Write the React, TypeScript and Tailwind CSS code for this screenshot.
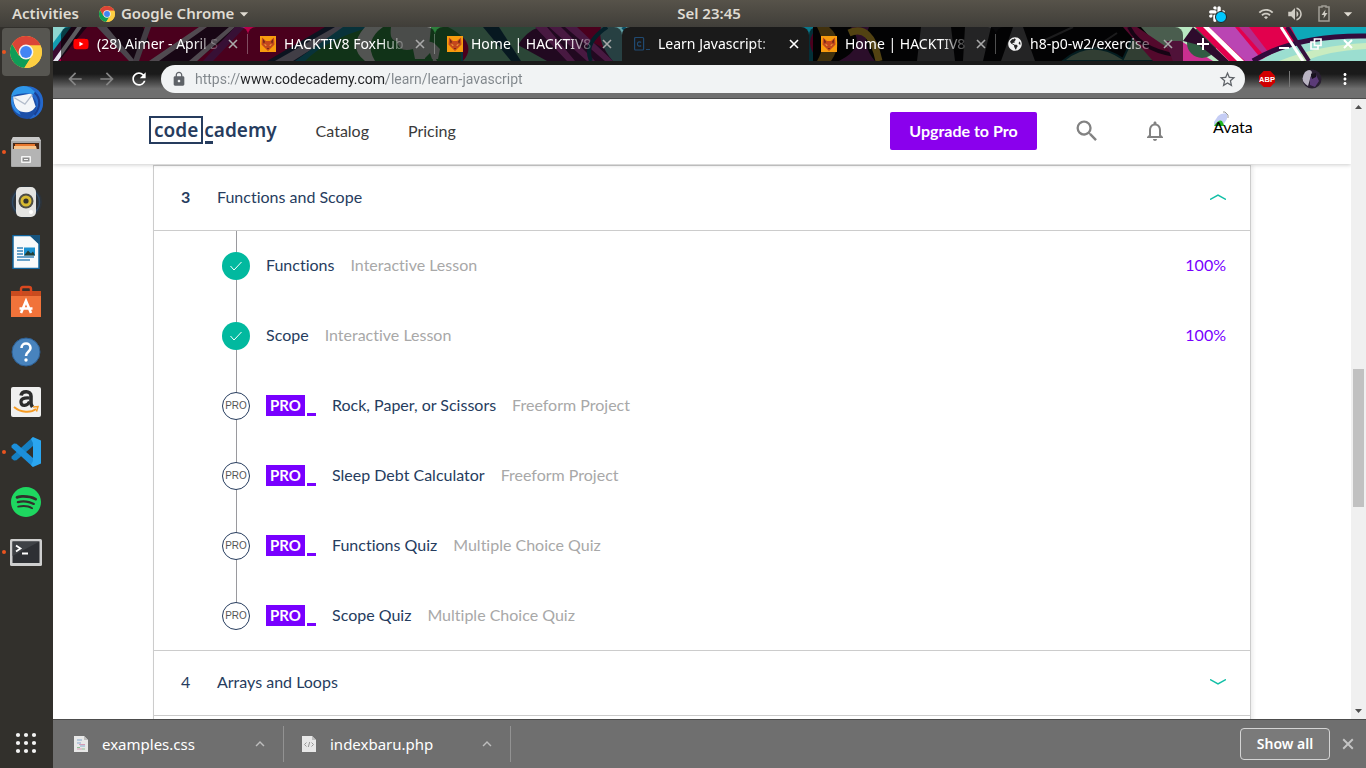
import React from "react";
import { clsx } from "clsx";
import {
  MdArrowBack,
  MdArrowForward,
  MdRefresh,
  MdLock,
  MdStarBorder,
  MdSearch,
  MdNotificationsNone,
  MdMoreVert,
  MdArrowDropDown,
  MdExpandLess,
  MdWifi,
  MdVolumeUp,
} from "react-icons/md";
import { FaSlack, FaYoutube, FaGlobeAmericas } from "react-icons/fa";
import { SiSpotify } from "react-icons/si";

function ChromeIcon({ className }: { className?: string }) {
  return (
    <svg viewBox="0 0 32 32" className={className} aria-hidden="true">
      <circle cx="16" cy="16" r="16" fill="#fbc93c" />
      <path d="M2.1 8A16 16 0 0 0 14.3 31.9L21.5 20.5 16 16 9 19.8Z" fill="#0f9d58" />
      <path d="M2.1 8A16 16 0 0 1 30.6 9.6L16 9.6 9.6 19.8Z" fill="#db4437" />
      <path d="M30.6 9.6A16 16 0 0 1 14.3 32L22 19.8 16 9.6Z" fill="#fdce42" />
      <circle cx="16" cy="16" r="7.4" fill="#f4f4f4" />
      <circle cx="16" cy="16" r="5.9" fill="#4285f4" />
    </svg>
  );
}

function ThunderbirdIcon() {
  return (
    <svg viewBox="0 0 34 34" className="size-9" aria-hidden="true">
      <circle cx="18" cy="18" r="15" fill="#1c4fa8" />
      <path d="M3 12C7 2 18 1 24 3c8 3 10 11 9 17-1 7-6 12-13 13 7-5 9-13 5-19C20 7 9 7 3 12Z" fill="#2468cc" />
      <path d="M3 12C2 21 6 27 12 29l-2-4C5 21 4 16 6 11Z" fill="#2f8be8" />
      <path d="M5 12 22 9l4 12c-2 5-8 7-14 5-5-2-7-8-7-14Z" fill="#f3f5f8" />
      <path d="m6 13 10 6 7-9" fill="none" stroke="#b3bccb" strokeWidth="1.2" />
      <path d="M3 12C4 4 12 0 20 3c4 2 5 5 8 6-7 1-9-1-13 0-4 0-8 1-12 3Z" fill="#2f97ea" />
      <path d="M25 8c6 5 6 14 0 21" stroke="#1a3f92" strokeWidth="2" fill="none" />
    </svg>
  );
}

function FilesIcon() {
  return (
    <svg viewBox="0 0 32 32" className="size-8" aria-hidden="true">
      <path d="M3 1h26l2 4v25a1 1 0 0 1-1 1H2a1 1 0 0 1-1-1V5Z" fill="#a8a8a8" />
      <path d="M3 1h26l2 4H1Z" fill="#c9c9c9" />
      <rect x="3" y="7" width="26" height="7" fill="#4c2a17" />
      <path d="M5 8h20v6H5Z" fill="#e9772d" />
      <path d="M4 10h22l1 4H4Z" fill="#f7c48c" />
      <rect x="2" y="13" width="28" height="17" fill="#b4b4b4" />
      <rect x="11" y="20" width="10" height="7" rx="1" fill="#f4f4f4" />
      <rect x="12.500" y="21.500" width="7" height="4" fill="#8b8b8b" />
      <path d="M14 23.500h4" stroke="#f4f4f4" />
    </svg>
  );
}

function RhythmboxIcon() {
  return (
    <svg viewBox="0 0 36 32" className="h-8 w-9" aria-hidden="true">
      <circle cx="18" cy="16" r="16" fill="#2d333a" />
      <circle cx="18" cy="16" r="13.5" fill="none" stroke="#2f4a66" strokeWidth="1.5" />
      <rect x="8" y="1" width="20" height="30" rx="5" fill="#e4e4e2" />
      <circle cx="18" cy="15" r="7.5" fill="#4d4d46" />
      <circle cx="18" cy="15" r="5.5" fill="#d7ba32" />
      <circle cx="18" cy="15" r="2.6" fill="#33332e" />
      <rect x="21" y="24" width="4" height="4" rx="2" fill="#fff" />
    </svg>
  );
}

function WriterIcon() {
  return (
    <svg viewBox="0 0 28 34" className="h-[34px] w-7" aria-hidden="true">
      <path d="M1 .5h18l8 8v25H1Z" fill="#f8fafb" stroke="#10659f" strokeWidth="1.5" />
      <path d="M17 0h11v10Z" fill="#16547f" />
      <path d="M5 13h6M5 16h6M5 19h6M5 22h17M5 25h13" stroke="#3b86ba" strokeWidth="1.6" />
      <rect x="12" y="12.500" width="11" height="8" fill="#1c91d0" />
      <path d="m12 20.500 4-5 3 3 2-2 2 4Z" fill="#233f36" />
    </svg>
  );
}

function SoftwareIcon() {
  return (
    <svg viewBox="0 0 32 34" className="h-[34px] w-8" aria-hidden="true">
      <path d="M1 6h30v26H1Z" fill="#ec6a30" />
      <path d="M1 6h30v5H1Z" fill="#c94c1f" />
      <path d="M1 11h30v21H1Z" fill="#f1733a" />
      <path d="M11 10V4q0-2 2-2h6q2 0 2 2v6" fill="none" stroke="#d9481f" strokeWidth="2.400" />
      <path d="M11 28 16 16l5 12M9.500 23.500h13" fill="none" stroke="#fff" strokeWidth="2.600" />
    </svg>
  );
}

function HelpIcon() {
  return (
    <svg viewBox="0 0 30 30" className="size-[30px]" aria-hidden="true">
      <circle cx="15" cy="15" r="14" fill="#4883bd" stroke="#2d5f94" />
      <path d="M10.500 11c0-6 9-6 9 0 0 4-4.500 3.500-4.500 8" fill="none" stroke="#fff" strokeWidth="2.600" />
      <circle cx="15" cy="23" r="1.700" fill="#fff" />
    </svg>
  );
}

function AmazonIcon() {
  return (
    <svg viewBox="0 0 30 30" className="size-[30px]" aria-hidden="true">
      <rect width="30" height="30" rx="2" fill="#f0f0f0" />
      <path d="M10 8.500c1-5 10-5 10 .5v7c0 2 .5 2.500 1.500 4" fill="none" stroke="#2c2c2c" strokeWidth="3.600" />
      <path d="M18.500 11c-6-.5-9 1-8.500 4.500.5 4 6.500 4 8.500-1" fill="none" stroke="#2c2c2c" strokeWidth="3.200" />
      <path d="M3 20c7 6 17 6 22 2" fill="none" stroke="#f49a23" strokeWidth="1.900" />
      <path d="m22 20 5-.5-1.500 5" fill="none" stroke="#f49a23" strokeWidth="1.500" />
    </svg>
  );
}

function CodeEditorIcon() {
  return (
    <svg viewBox="0 0 30 30" className="size-[30px]" aria-hidden="true">
      <path d="M22 0 .5 19.500v2l2.500 2 2.500-.2L22 9Z" fill="#1580c4" />
      <path d="M22 30 .5 10.500v-2l2.500-2 2.500.2L22 21Z" fill="#1c8fdb" />
      <path d="M22 0 30 3.500v23L22 30l-2-2 2-4V6l-2-4Z" fill="#2ba6f0" />
    </svg>
  );
}

function TerminalIcon() {
  return (
    <svg viewBox="0 0 32 27" className="h-[27px] w-8" aria-hidden="true">
      <rect width="32" height="27" rx="1.500" fill="#cfcfcf" />
      <rect x="2.500" y="2.500" width="27" height="21.500" fill="#2e3034" />
      <path d="M2.500 2.500h27L2.500 17Z" fill="#3f4246" />
      <path d="m6 6.500 4.500 3L6 12.500M12 14.500h6" fill="none" stroke="#fff" strokeWidth="1.800" />
    </svg>
  );
}

function FoxIcon() {
  return (
    <svg viewBox="0 0 16 16" className="size-4 shrink-0" aria-hidden="true">
      <rect width="16" height="16" fill="#f89c0e" />
      <path d="M2 1.500 6 5h4l4-3.500.5 7L11 12l-3 3-3-3-3.500-3.500Z" fill="#c4481d" />
      <path d="m3 3 2 3-1.500 1.500ZM13 3l-2 3 1.500 1.500Z" fill="#5c2315" />
      <path d="m4 8 2.500 1L6 10ZM12 8 9.500 9l.5 1Z" fill="#ffd24d" />
      <path d="m7 12 1 1 1-1Z" fill="#2d1511" />
    </svg>
  );
}

function CodecademyFavicon() {
  return (
    <svg viewBox="0 0 16 16" className="size-4 shrink-0" aria-hidden="true">
      <rect x=".6" y="1.500" width="9" height="12.500" rx="1" fill="none" stroke="#204a72" strokeWidth="1.200" />
      <path d="M7.100 6.500c-1-1.200-3.700-.8-3.700 1.500s2.700 2.700 3.700 1.500M12 13.500h4" fill="none" stroke="#204a72" strokeWidth="1.200" />
    </svg>
  );
}

function CrossIcon({ className }: { className?: string }) {
  return (
    <svg viewBox="0 0 10 10" className={className} aria-hidden="true">
      <path d="m1 1 8 8m0-8-8 8" stroke="currentColor" strokeWidth="1.600" />
    </svg>
  );
}

function FileIcon({ kind }: { kind: "css" | "php" }) {
  return (
    <svg viewBox="0 0 14 16" className="h-4 w-3.5 shrink-0" aria-hidden="true">
      <path d="M0 0h10l4 4v12H0Z" fill="#e8e8e8" />
      <path d="M10 0v4h4Z" fill="#bdbdbd" />
      {kind === "css" ? (
        <>
          <path d="M3 4h5M3 7h4M6 10h5" stroke="#86a9cf" />
          <path d="M5 8.500h6M3 13h5" stroke="#d69bb5" />
          <path d="M3 11.500h3M8 13h3" stroke="#8cc094" />
        </>
      ) : (
        <path d="m4.500 6.500-2 2 2 2M9.500 6.500l2 2-2 2M7.700 6l-1.400 5" fill="none" stroke="#8f8f8f" strokeWidth=".9" />
      )}
    </svg>
  );
}

function Wallpaper() {
  return (
    <svg viewBox="0 0 1313 34" preserveAspectRatio="none" className="absolute inset-0 h-full w-full" aria-hidden="true">
      <rect width="1313" height="34" fill="#b80049" />
      <path d="M0 0h22L0 32Z" fill="#8fd6d0" />
      <path d="M12 0h10L0 26V16Z" fill="#139bb0" />
      <path d="M18 0h16L6 34H0V24Z" fill="#3a0a30" />
      <path d="M24 0h5L5 34H0Z" fill="#e6e6f0" />
      <path d="M48 0h42l6 14-16 20-14-18Z" fill="#35102f" />
      <path d="m44 0 32 34h6L54 0Z" fill="#bcaec0" />
      <path d="m92 0 6 0-12 34h-6Z" fill="#a79aab" />
      <path d="m100 34 54-34h34l-46 34Z" fill="#3a0f33" />
      <path d="m96 34 50-34h8l-48 34Zm40 0 40-34h6l-38 34Z" fill="#c9b8c8" />
      <path d="m150 34 32-34h10l-32 34Z" fill="#8b2a86" />
      <path d="M214 34 272 0h118v34Z" fill="#20304f" />
      <path d="m222 34 60-34h12l-54 34Z" fill="#a39bae" />
      <path d="M242 34 290 0h120v34Z" fill="#157e92" />
      <path d="M252 34q22-22 66-34h90v34Z" fill="#2c7f3c" />
      <path d="M312 0q-18 20 0 34h10q-12-20 8-34Z" fill="#cdd3cd" />
      <path d="M328 0h64q-14 12-4 34h-8l-2-12-8 2 2 8h-10l-2-10q-14 4-16-8-8 0-6-14Z" fill="#b9bdb9" />
      <path d="M378 0h18v34h-12l-8-14Z" fill="#2c7f3c" />
      <path d="M367 22q4-10 14-6l6 6-2 10h-6l-2-6-6 6Z" fill="#b9bdb9" />
      <path d="M395 0h90l40 34H410q16-18-15-34Z" fill="#6cae8a" />
      <path d="m430 0 28 34h10L446 0Z" fill="#123d52" />
      <path d="M465 18q16-26 48-18l60 34H494Z" fill="#541750" />
      <path d="m482 0 32 34h8L494 0Zm14 0 38 34h8L508 0Zm16 0 40 34h8L524 0Z" fill="#b53fa4" />
      <path d="M548 0h70v34h-58q-16-18-12-34Z" fill="#62a0a5" />
      <path d="M538 34q-8-18 16-34M570 0q12 18 56 24" fill="none" stroke="#0d5066" strokeWidth="4" />
      <path d="M740 0h26q-18 14 0 34h-26Z" fill="#0b778a" />
      <path d="M760 0h380v34H760Z" fill="#09090b" />
      <path d="M764 34q10-16 0-34h12q16 14 2 34Z" fill="#a37b22" />
      <path d="M786 34q28-14 12-34h18q-8 18 6 34Z" fill="#6d2369" />
      <path d="M796 6q22-10 30 28" fill="none" stroke="#cda52e" strokeWidth="7" />
      <path d="m868 0 30 0 4 34h-38Zm44 0h26l-8 34h-20Zm36 34 12-34h10l12 34Z" fill="#5b5b5d" />
      <path d="m990 14 30-14M1040 22l24-16" fill="none" stroke="#48484a" strokeWidth="2" />
      <path d="M1010 34q28-24 60-2l12-26q12 22 40 28Z" fill="#7a9b80" stroke="#0b4a52" strokeWidth="2" />
      <path d="M1088 0h70l54 34H1118Z" fill="#b9e8c2" />
      <path d="m1070 0 14 0 50 34h-34Z" fill="#cf176f" />
      <path d="M1076 0q12 26 60 30" fill="none" stroke="#390b34" strokeWidth="4" />
      <path d="M1112 14h16l32 20h-40Z" fill="#c92f8f" />
      <circle cx="1149" cy="16" r="15" fill="#315c43" />
      <path d="m1140 0 36 34h-10l-20-16-16-4Z" fill="#2d0b2c" />
      <path d="M1142 0h130v34h-96Z" fill="#e2004d" />
      <path d="m1156 0 36 34h18L1182 0Z" fill="#ba45b3" />
      <path d="m1150 0 34 34h7L1156 0Z" fill="#fff" />
      <path d="m1186 0 30 34h6L1196 0Z" fill="#b52a8a" />
      <path d="M1238 0h75v34h-58Z" fill="#0ea7b8" />
      <path d="M1206 34q40-26 107-24v24Z" fill="#9bded0" />
      <path d="M1226 34q40-16 87-18v6q-40 2-60 12Z" fill="#c9ecc0" />
      <path d="M1200 34q42-26 113-25" fill="none" stroke="#320b3d" strokeWidth="5" />
      <path d="m1228 0 22 34" stroke="#fff" strokeWidth="3" />
      <path d="m1234 0 22 34" stroke="#35103d" strokeWidth="4" />
    </svg>
  );
}

const dockItems: { name: string; icon: React.ReactNode; running?: boolean; active?: boolean }[] = [
  { name: "Google Chrome", icon: <ChromeIcon className="size-8" />, running: true, active: true },
  { name: "Thunderbird Mail", icon: <ThunderbirdIcon /> },
  { name: "Files", icon: <FilesIcon />, running: true },
  { name: "Rhythmbox", icon: <RhythmboxIcon /> },
  { name: "LibreOffice Writer", icon: <WriterIcon /> },
  { name: "Ubuntu Software", icon: <SoftwareIcon /> },
  { name: "Help", icon: <HelpIcon /> },
  { name: "Amazon", icon: <AmazonIcon /> },
  { name: "Visual Studio Code", icon: <CodeEditorIcon />, running: true },
  { name: "Spotify", icon: <SiSpotify className="size-[30px] text-[#1ed760]" /> },
  { name: "Terminal", icon: <TerminalIcon />, running: true },
];

const tabs: { title: string; icon: React.ReactNode; active?: boolean; divider?: boolean }[] = [
  {
    title: "(28) Aimer - April S",
    icon: (
      <span className="relative flex size-4 shrink-0 items-center justify-center">
        <span className="absolute size-1.5 bg-white" />
        <FaYoutube className="relative size-4 text-[#ff0000]" />
      </span>
    ),
    divider: true,
  },
  { title: "HACKTIV8 FoxHub", icon: <FoxIcon />, divider: true },
  { title: "Home | HACKTIV8", icon: <FoxIcon /> },
  { title: "Learn Javascript:", icon: <CodecademyFavicon />, active: true },
  { title: "Home | HACKTIV8", icon: <FoxIcon />, divider: true },
  { title: "h8-p0-w2/exercise", icon: <FaGlobeAmericas className="size-3.5 shrink-0 text-[#f2f2f2]" /> },
];

const lessons: { title: string; kind: string; done?: boolean }[] = [
  { title: "Functions", kind: "Interactive Lesson", done: true },
  { title: "Scope", kind: "Interactive Lesson", done: true },
  { title: "Rock, Paper, or Scissors", kind: "Freeform Project" },
  { title: "Sleep Debt Calculator", kind: "Freeform Project" },
  { title: "Functions Quiz", kind: "Multiple Choice Quiz" },
  { title: "Scope Quiz", kind: "Multiple Choice Quiz" },
];

function TopBar() {
  return (
    <header className="grid h-[27px] shrink-0 grid-cols-[1fr_auto_1fr] items-center bg-linear-to-b from-[#57534a] to-[#403e39] px-3 text-[15px] font-semibold text-[#dfdbd2]">
      <div className="flex items-center gap-5">
        <button type="button">Activities</button>
        <button type="button" className="flex items-center">
          <ChromeIcon className="mr-1.5 size-4" />
          Google Chrome
          <MdArrowDropDown className="size-5" />
        </button>
      </div>
      <time className="pl-[52px]">Sel 23:45</time>
      <div className="flex items-center justify-end">
        <span className="relative mr-8 flex">
          <FaSlack className="size-[18px] text-white" />
          <span className="absolute -right-px bottom-0 size-3 rounded-full border border-[#222] bg-[#00c8ff]" />
        </span>
        <MdWifi className="mr-3 size-4 text-[#cfccc4]" />
        <MdVolumeUp className="mr-3.5 size-[18px] text-[#cfccc4]" />
        <svg viewBox="0 0 12 17" className="mr-2 h-[17px] w-3" fill="none" aria-hidden="true">
          <path d="M4 2V1h4v1h3v14H1V2Z" stroke="#a19e96" strokeWidth="1.500" />
          <path d="M7.500 4.500 3.500 10H6l-.5 3.500 4-5.500H7Z" fill="#cfccc4" />
        </svg>
        <MdArrowDropDown className="-mr-1 size-5" />
      </div>
    </header>
  );
}

function Dock() {
  return (
    <nav aria-label="Dock" className="flex w-[53px] shrink-0 flex-col bg-[#32302c] py-px">
      <ul className="flex flex-col gap-0.5">
        {dockItems.map((item) => (
          <li key={item.name} className="relative pr-[3px] pl-0.5">
            <button
              type="button"
              aria-label={item.name}
              className={clsx("flex h-12 w-full items-center justify-center rounded-[4px]", item.active && "bg-[#575651]")}
            >
              {item.icon}
            </button>
            {item.running && <span className="absolute top-[22px] left-0.5 size-1 rounded-full bg-[#e95420]" />}
          </li>
        ))}
      </ul>
      <button type="button" aria-label="Show Applications" className="mt-auto mb-[13px] flex justify-center pr-0.5">
        <svg viewBox="0 0 22 22" className="size-[22px]" fill="#f4f4f4" aria-hidden="true">
          {[3, 11, 19].map((y) => [3, 11, 19].map((x) => <circle key={`${x}-${y}`} cx={x} cy={y} r="2.100" />))}
        </svg>
      </button>
    </nav>
  );
}

function TabStrip() {
  return (
    <div className="relative flex h-[34px] shrink-0 items-stretch overflow-hidden pl-2">
      <Wallpaper />
      <div role="tablist" className="relative flex min-w-0">
        {tabs.map((tab, i) => (
          <div
            key={i}
            className={clsx(
              "relative flex w-[187px] min-w-0 items-center rounded-t-lg pr-2.5 pl-3",
              tab.active ? "bg-[#1a1a1a]" : "bg-black/60",
            )}
          >
            <button type="button" role="tab" aria-selected={!!tab.active} className="flex min-w-0 flex-1 items-center gap-2">
              {tab.icon}
              <span className="min-w-0 flex-1 overflow-hidden mask-r-from-75% text-left text-sm whitespace-nowrap text-white">
                {tab.title}
              </span>
            </button>
            <button type="button" aria-label="Close tab" className={clsx("ml-1 shrink-0", tab.active ? "text-white" : "text-[#a9a9a9]")}>
              <CrossIcon className="size-2.5" />
            </button>
            {tab.divider && <span className="absolute top-[7px] right-0 h-5 w-px bg-white/30" />}
          </div>
        ))}
      </div>
      <button type="button" aria-label="New tab" className="relative ml-3.5 text-white">
        <svg viewBox="0 0 12 12" className="size-3" aria-hidden="true"><path d="M6 0v12M0 6h12" stroke="currentColor" strokeWidth="2" /></svg>
      </button>
      <div className="relative ml-auto flex items-center gap-5 pr-3 text-white">
        <button type="button" aria-label="Minimize">
          <svg viewBox="0 0 12 12" className="size-3" aria-hidden="true"><path d="M1 10h10" stroke="currentColor" strokeWidth="2" /></svg>
        </button>
        <button type="button" aria-label="Restore">
          <svg viewBox="0 0 12 12" className="size-3" fill="none" stroke="currentColor" strokeWidth="1.700" aria-hidden="true">
            <path d="M4.500 1h6.500v6.500H4.500ZM4 4H1v7h7V8" />
          </svg>
        </button>
        <button type="button" aria-label="Close window">
          <svg viewBox="0 0 12 12" className="size-3" aria-hidden="true"><path d="m2 2 8 8m0-8-8 8" stroke="currentColor" strokeWidth="2" /></svg>
        </button>
      </div>
    </div>
  );
}

function Toolbar() {
  return (
    <div className="flex h-[38px] shrink-0 items-center border-b border-[#4c4c4c] bg-linear-to-b from-[#1a1a1a] from-35% to-[#6f6f6f] to-75% px-3 pb-px">
      <div className="flex shrink-0 items-center gap-3 text-[#858585]">
        <button type="button" aria-label="Back"><MdArrowBack className="size-5" /></button>
        <button type="button" aria-label="Forward"><MdArrowForward className="size-5" /></button>
        <button type="button" aria-label="Reload"><MdRefresh className="size-5 text-white" /></button>
      </div>
      <div className="ml-3 flex h-7 min-w-0 flex-1 items-center rounded-full bg-[#f1f3f4] pr-2 pl-2.5">
        <MdLock className="size-4 shrink-0 text-[#5f6368]" />
        <input
          type="text"
          aria-label="Address"
          defaultValue="https://www.codecademy.com/learn/learn-javascript"
          className="ml-2 min-w-0 flex-1 bg-[linear-gradient(to_right,#80868b_45px,#202124_45px,#202124_191px,#80868b_191px)] bg-clip-text font-['Roboto',sans-serif] text-sm text-transparent caret-black outline-none"
        />
        <button type="button" aria-label="Bookmark" className="text-[#5f6368]"><MdStarBorder className="size-[19px]" /></button>
      </div>
      <div className="ml-3.5 flex shrink-0 items-center">
        <button type="button" aria-label="Adblock Plus">
          <svg viewBox="0 0 16 16" className="size-4" aria-hidden="true">
            <path d="M4.700 0h6.600L16 4.700v6.600L11.300 16H4.700L0 11.300V4.700Z" fill="#d10000" />
            <text x="8" y="10.900" textAnchor="middle" fontSize="7.500" fontWeight="700" fontFamily="Liberation Sans, sans-serif" fill="#fff">ABP</text>
          </svg>
        </button>
        <span className="ml-3.5 h-4 w-px bg-[#777]" />
        <button type="button" aria-label="Profile" className="ml-3">
          <svg viewBox="0 0 20 20" className="size-5" aria-hidden="true">
            <circle cx="10" cy="10" r="9.500" fill="#2a2033" />
            <path d="M3 3q5-4 7 0L6 17Q-3 12 3 3Z" fill="#b9b4c2" />
            <path d="m8 9 6-3 3 6-4 6-5-2Z" fill="#5b3b78" />
            <path d="m9 5 5-1v4l-4 2Z" fill="#17121d" />
          </svg>
        </button>
        <button type="button" aria-label="Menu" className="ml-3.5 text-white"><MdMoreVert className="size-[18px]" /></button>
      </div>
    </div>
  );
}

function SiteHeader() {
  return (
    <header className="relative z-10 flex h-[65px] shrink-0 items-center bg-white pr-[98px] pb-0.5 pl-24 text-base text-[#3a3a3a] shadow-[0_1px_4px_rgba(0,0,0,0.2)]">
      <a href="#home" aria-label="codecademy" className="mb-0.5 flex h-7 items-stretch font-['Noto_Sans',sans-serif] text-[19px] leading-6 font-semibold text-[#263c5e]">
        <span className="flex items-center border-[2px] border-[#263c5e] px-[3px]">code</span>
        <span className="relative flex items-center pl-px">
          cademy
          <span className="absolute bottom-0 left-0.5 h-[3px] w-2 bg-[#263c5e]" />
        </span>
      </a>
      <nav aria-label="Main" className="ml-[39px] flex gap-[39px]">
        <a href="#catalog">Catalog</a>
        <a href="#pricing">Pricing</a>
      </nav>
      <div className="ml-auto flex items-center">
        <button type="button" className="h-[38px] w-[147px] rounded-xs bg-[#8a00ed] font-bold text-white">Upgrade to Pro</button>
        <button type="button" aria-label="Search" className="ml-9 text-[#828282]"><MdSearch className="size-7" /></button>
        <button type="button" aria-label="Notifications" className="ml-[42px] text-[#828282]"><MdNotificationsNone className="size-6" /></button>
        <button type="button" className="relative ml-[46px] flex h-10 w-10 items-start text-left leading-8 text-black">
          <svg viewBox="0 0 16 16" className="absolute top-0 left-0 size-4" aria-hidden="true">
            <path d="M1 11 5 5l3-2 6-1v6l-4 6H1Z" fill="#c5cdf5" />
            <path d="M10 1h2l3 3v3" fill="none" stroke="#999" />
            <path d="M1 15q5-7 8-5l2 4v1Z" fill="#22b422" />
          </svg>
          <span className="relative">Avata</span>
        </button>
      </div>
    </header>
  );
}

function Chevron({ up }: { up?: boolean }) {
  return (
    <svg viewBox="0 0 16 6" className="h-1.5 w-4" fill="none" stroke="#10bfa6" strokeWidth="1.500" aria-hidden="true">
      <path d={up ? "M0 5.500 8 1l8 4.500" : "M0 .5 8 5l8-4.500"} />
    </svg>
  );
}

function ModuleHeader({ number, title, open }: { number: number; title: string; open?: boolean }) {
  return (
    <button type="button" aria-expanded={!!open} className="flex h-[65px] w-full items-center border-b border-[#cccccc] pr-6 pb-0.5 pl-[27px] text-left">
      <span className={clsx("w-9", open && "font-bold")}>{number}</span>
      <span className="flex-1">{title}</span>
      <Chevron up={open} />
    </button>
  );
}

function LessonRow({ title, kind, done, last }: { title: string; kind: string; done?: boolean; last?: boolean }) {
  return (
    <li className="relative flex h-[70px] items-center pr-6 pl-[68px]">
      <span className={clsx("absolute top-0 left-[82px] w-px bg-[#9a9a9e]", last ? "h-1/2" : "h-full")} />
      {done ? (
        <span className="relative flex size-7 items-center justify-center rounded-full bg-[#02b99f]">
          <svg viewBox="0 0 12 10" className="h-2.5 w-3" fill="none" stroke="#fff" aria-label="Completed"><path d="m.5 5 3.500 4 7.500-8" /></svg>
        </span>
      ) : (
        <span className="relative flex size-7 items-center justify-center rounded-full border border-[#263c5e] bg-white pb-0.5 font-['Liberation_Sans',sans-serif] text-[10px] text-[#555]">
          PRO
        </span>
      )}
      <span className="flex flex-1 items-center gap-4 pb-0.5 pl-4">
        {!done && (
          <span className="flex items-end gap-0.5">
            <span className="flex h-[21px] w-[39px] items-center justify-center bg-[#7800ff] text-[15px] font-bold text-white">PRO</span>
            <span className="h-[3px] w-[9px] bg-[#7800ff]" />
          </span>
        )}
        <a href="#lesson">{title}</a>
        <span className="text-[#a8a8a8]">{kind}</span>
        {done && <span className="ml-auto text-[#7800ff]">100%</span>}
      </span>
    </li>
  );
}

function Page() {
  return (
    <div className="flex min-h-0 flex-1 bg-white font-['Lato',sans-serif] [font-variant-ligatures:none]">
      <div className="flex min-w-0 flex-1 flex-col overflow-hidden">
        <SiteHeader />
        <main className="min-h-0 flex-1 overflow-hidden px-[100px] pt-px text-base text-[#263c5e]">
          <div className="border-x border-t border-[#cccccc] shadow-[2px_0_4px_rgba(0,0,0,0.08)]">
            <section>
              <ModuleHeader number={3} title="Functions and Scope" open />
              <ul className="border-b border-[#cccccc] [&>li:last-child]:-mb-px">
                {lessons.map((lesson, i) => (
                  <LessonRow key={lesson.title} {...lesson} last={i === lessons.length - 1} />
                ))}
              </ul>
            </section>
            <section>
              <ModuleHeader number={4} title="Arrays and Loops" />
            </section>
            <div className="h-10" />
          </div>
        </main>
      </div>
      <div className="flex w-[15px] shrink-0 flex-col items-center bg-[#f0f0f0]" aria-hidden="true">
        <svg viewBox="0 0 15 16" className="h-4 w-[15px]" fill="#505050"><path d="M4 10h7L7.500 6Z" /></svg>
        <div className="grow-[254]" />
        <div className="w-[11px] grow-[138] bg-[#c1c1c1]" />
        <div className="grow-[196]" />
        <svg viewBox="0 0 15 16" className="h-4 w-[15px]" fill="#505050"><path d="M4 6h7l-3.500 4Z" /></svg>
      </div>
    </div>
  );
}

function Downloads() {
  return (
    <footer className="flex h-[49px] shrink-0 items-center border-t border-[#4c4c4c] bg-[#6f6f6f] pr-3 text-[15px] text-white">
      {([["examples.css", "css"], ["indexbaru.php", "php"]] as const).map(([name, kind], i) => (
        <div key={name} className={clsx("flex h-9 items-center border-r border-[#929292] pr-3.5", i === 0 ? "w-[231px] pl-[21px]" : "w-[227px] pl-[18px]")}>
          <button type="button" className="flex flex-1 items-center gap-3.5">
            <FileIcon kind={kind} />
            {name}
          </button>
          <button type="button" aria-label={`Options for ${name}`} className="text-[#bdbdbd]"><MdExpandLess className="size-[18px]" /></button>
        </div>
      ))}
      <button type="button" className="ml-auto h-8 w-[90px] rounded-[4px] border border-[#d4d4d4] bg-[#7a7a7a] text-sm font-semibold">Show all</button>
      <button type="button" aria-label="Close downloads" className="ml-3 text-[#c4c4c4]"><CrossIcon className="size-3" /></button>
    </footer>
  );
}

export default function App() {
  return (
    <div className="flex h-screen flex-col overflow-hidden font-['Noto_Sans',sans-serif]">
      <TopBar />
      <div className="flex min-h-0 flex-1">
        <Dock />
        <div className="flex min-w-0 flex-1 flex-col">
          <TabStrip />
          <Toolbar />
          <Page />
          <Downloads />
        </div>
      </div>
    </div>
  );
}
